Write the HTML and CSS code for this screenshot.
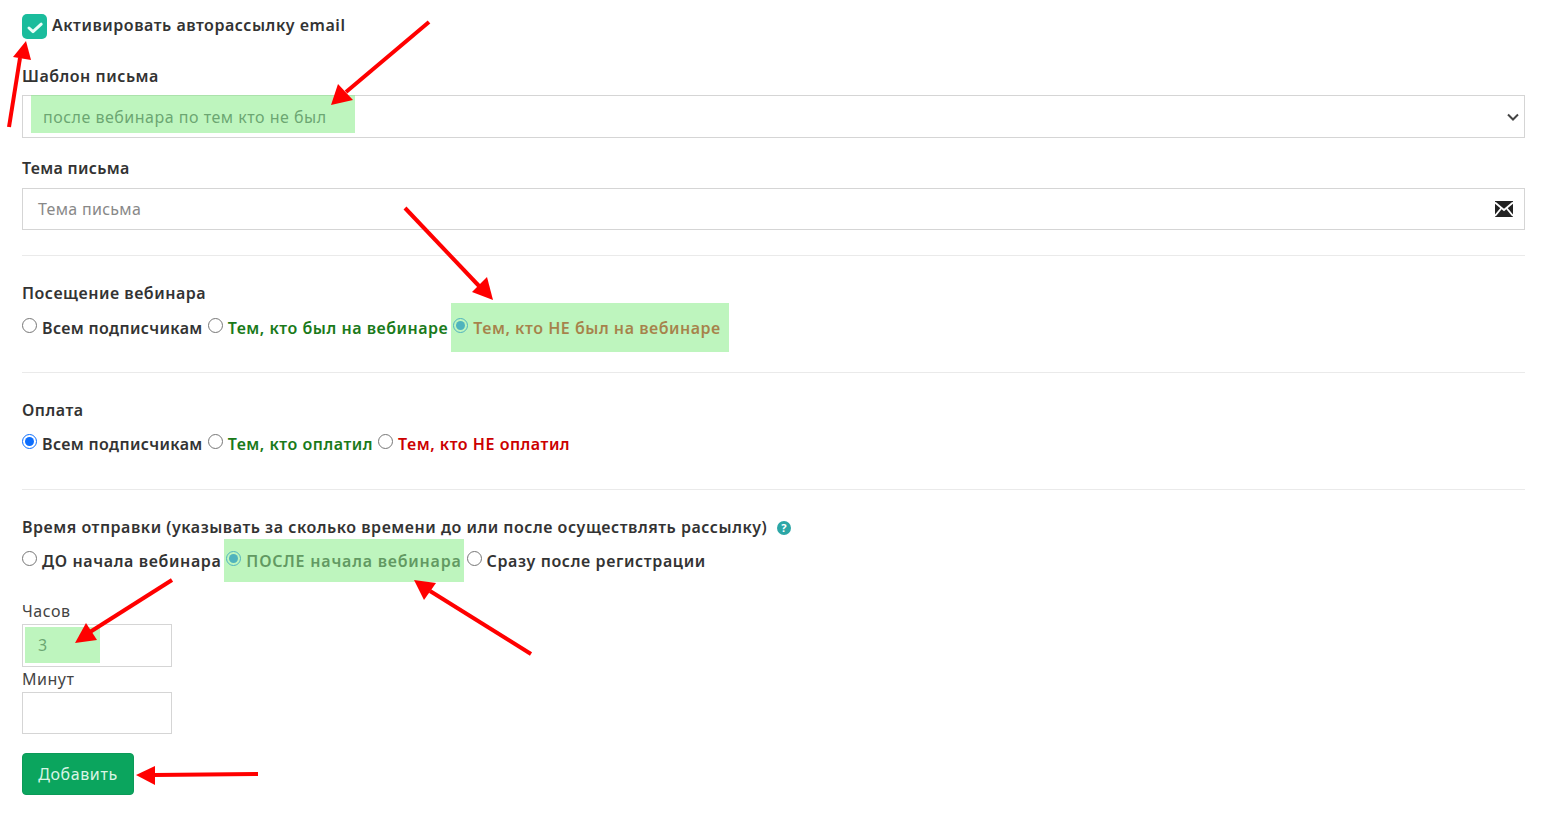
FILE: index.html
```html
<!DOCTYPE html>
<html lang="ru">
<head>
<meta charset="utf-8">
<title>Авторассылка</title>
<link rel="stylesheet" href="styles.css">
</head>
<body>
<form class="form">
  <div class="check-row">
    <span class="checkbox"><svg viewBox="0 0 25 25" width="25" height="25"><path d="M7 14l4 3.6 8.2-7.4" fill="none" stroke="#eafff9" stroke-width="3" stroke-linecap="round" stroke-linejoin="round"/></svg></span>
    <span class="label-text">Активировать авторассылку email</span>
  </div>

  <div class="field field-template">
    <div class="label-text">Шаблон письма</div>
    <div class="control select">
      <span class="value">после вебинара по тем кто не был</span>
      <svg class="chevron" viewBox="0 0 12 8" width="12" height="8"><path d="M1 1.5l5 5 5-5" fill="none" stroke="#444" stroke-width="2"/></svg>
    </div>
  </div>

  <div class="field field-subject">
    <div class="label-text label-short">Тема письма</div>
    <div class="control input">
      <span class="placeholder">Тема письма</span>
      <svg class="mail" viewBox="0 0 18 16" width="18" height="16"><rect width="18" height="16" fill="#222"/><path d="M0 1.5l9 7.5 9-7.5M0 15l6.5-8M18 15l-6.5-8" fill="none" stroke="#fff" stroke-width="1.8"/></svg>
    </div>
  </div>

  <hr class="rule rule-first">

  <section class="group">
    <div class="label-text">Посещение вебинара</div>
    <div class="radios">
      <label class="radio narrow"><input type="radio" name="visit"><span>Всем подписчикам</span></label>
      <label class="radio green"><input type="radio" name="visit"><span>Тем, кто был на вебинаре</span></label>
      <label class="radio red"><input type="radio" name="visit" checked><span>Тем, кто НЕ был на вебинаре</span></label>
    </div>
  </section>

  <hr class="rule">

  <section class="group">
    <div class="label-text">Оплата</div>
    <div class="radios radios-tight">
      <label class="radio narrow"><input type="radio" name="pay" checked><span>Всем подписчикам</span></label>
      <label class="radio green"><input type="radio" name="pay"><span>Тем, кто оплатил</span></label>
      <label class="radio red"><input type="radio" name="pay"><span>Тем, кто НЕ оплатил</span></label>
    </div>
  </section>

  <hr class="rule">

  <section class="group group-last">
    <div class="label-text">Время отправки (указывать за сколько времени до или после осуществлять рассылку) <span class="help">?</span></div>
    <div class="radios radios-tight">
      <label class="radio wide"><input type="radio" name="time"><span>ДО начала вебинара</span></label>
      <label class="radio wider"><input type="radio" name="time" checked><span>ПОСЛЕ начала вебинара</span></label>
      <label class="radio wide"><input type="radio" name="time"><span>Сразу после регистрации</span></label>
    </div>
  </section>

  <div class="small-field small-hours">
    <div class="small-label">Часов</div>
    <div class="control small-input"><span class="value">3</span></div>
  </div>
  <div class="small-field small-minutes">
    <div class="small-label">Минут</div>
    <div class="control small-input"></div>
  </div>

  <button type="button" class="submit">Добавить</button>
</form>

<div class="mark mark-template"></div>
<div class="mark mark-visit"></div>
<div class="mark mark-time"></div>
<div class="mark mark-hours"></div>

<svg class="arrows" viewBox="0 0 1543 814" width="1543" height="814">
  <g fill="none" stroke="#f00" stroke-width="4">
    <path d="M9 127L20 58"/>
    <path d="M429 22L346 92"/>
    <path d="M405 208L480 287"/>
    <path d="M172 580L90 632"/>
    <path d="M531 654L430 591"/>
    <path d="M258 774L154 775"/>
  </g>
  <g fill="#f00">
    <path d="M26 41L13 57L31 60Z"/>
    <path d="M331 105L338 84L353 100Z"/>
    <path d="M493 300L472 292L487 277Z"/>
    <path d="M75 643L86 623L97 640Z"/>
    <path d="M414 580L436 583L424 600Z"/>
    <path d="M136 775L155 766L155 785Z"/>
  </g>
</svg>
</body>
</html>
```
FILE: styles.css
```css
* { box-sizing: border-box; }
html, body { margin: 0; padding: 0; }
body {
  position: relative;
  height: 814px;
  overflow: hidden;
  background: #fff;
  color: #333;
  font-family: "Noto Sans", "Open Sans", sans-serif;
  font-size: 16px;
  line-height: 24px;
  letter-spacing: .5px;
}
.form { padding: 14px 18px 0 22px; }
.label-text { font-weight: 600; color: #333; letter-spacing: .52px; }
.label-short { letter-spacing: .3px; }

.check-row { display: flex; align-items: flex-start; gap: 5px; height: 25px; }
.check-row .label-text { line-height: 23px; }
.checkbox { width: 25px; height: 25px; border-radius: 5px; background: #1abc9c; display: block; }
.checkbox svg { display: block; }

.field-template { margin-top: 25px; }
.field-subject { margin-top: 18px; }
.control { border: 1px solid #d5d5d5; background: #fff; }
.field .control { margin-top: 7px; }
.select, .input { display: flex; align-items: center; justify-content: space-between; }
.select { height: 43px; padding: 0 5px 0 20px; }
.field .input { height: 42px; padding: 0 11px 0 15px; margin-top: 8px; }
.value { color: #495057; }
.placeholder { color: #888; letter-spacing: .3px; }

.rule { border: 0; border-top: 1px solid #eaeaea; margin: 0; }
.rule-first { margin-top: 25px; }
.group { padding-top: 25px; height: 116px; }
.group-last { height: 109px; }
.radios { display: flex; gap: 5px; margin-top: 11px; font-weight: 600; letter-spacing: .52px; }
.radios-tight { margin-top: 10px; }
.radio { display: flex; gap: 5px; align-items: flex-start; }
.radio input { width: 15px; height: 15px; margin: 2px 0 0; accent-color: #0d6efd; flex: none; }
.narrow { letter-spacing: .35px; }
.wide { letter-spacing: .62px; }
.wider { letter-spacing: .78px; }
.green { color: #1a7a1a; }
.red { color: #c00; }
.help {
  display: inline-block;
  width: 14px; height: 14px;
  margin-left: 5px;
  border-radius: 50%;
  background: #2ba6a6;
  color: #fff;
  font-size: 11px;
  font-weight: 700;
  line-height: 14px;
  letter-spacing: 0;
  text-align: center;
  vertical-align: 1px;
}

.small-field { width: 150px; }
.small-label { color: #444; line-height: 24px; }
.small-input { padding: 8px 15px; }
.small-hours .small-input { height: 43px; margin-top: 1px; }
.small-minutes .small-input { height: 42px; margin-top: 1px; }
.submit {
  display: block;
  width: 112px; height: 42px;
  margin-top: 19px;
  border: 1px solid #0b9a58;
  border-radius: 4px;
  background: #0ba55e;
  color: #d9f5e6;
  font: 400 16px/24px "Noto Sans", "Open Sans", sans-serif;
  letter-spacing: .6px;
}

.mark { position: absolute; background: rgba(137, 236, 137, .55); }
.mark-template { left: 31px; top: 95px; width: 324px; height: 38px; }
.mark-visit { left: 451px; top: 303px; width: 278px; height: 49px; }
.mark-time { left: 224px; top: 539px; width: 240px; height: 43px; }
.mark-hours { left: 25px; top: 627px; width: 75px; height: 36px; }
.arrows { position: absolute; left: 0; top: 0; pointer-events: none; }
```
